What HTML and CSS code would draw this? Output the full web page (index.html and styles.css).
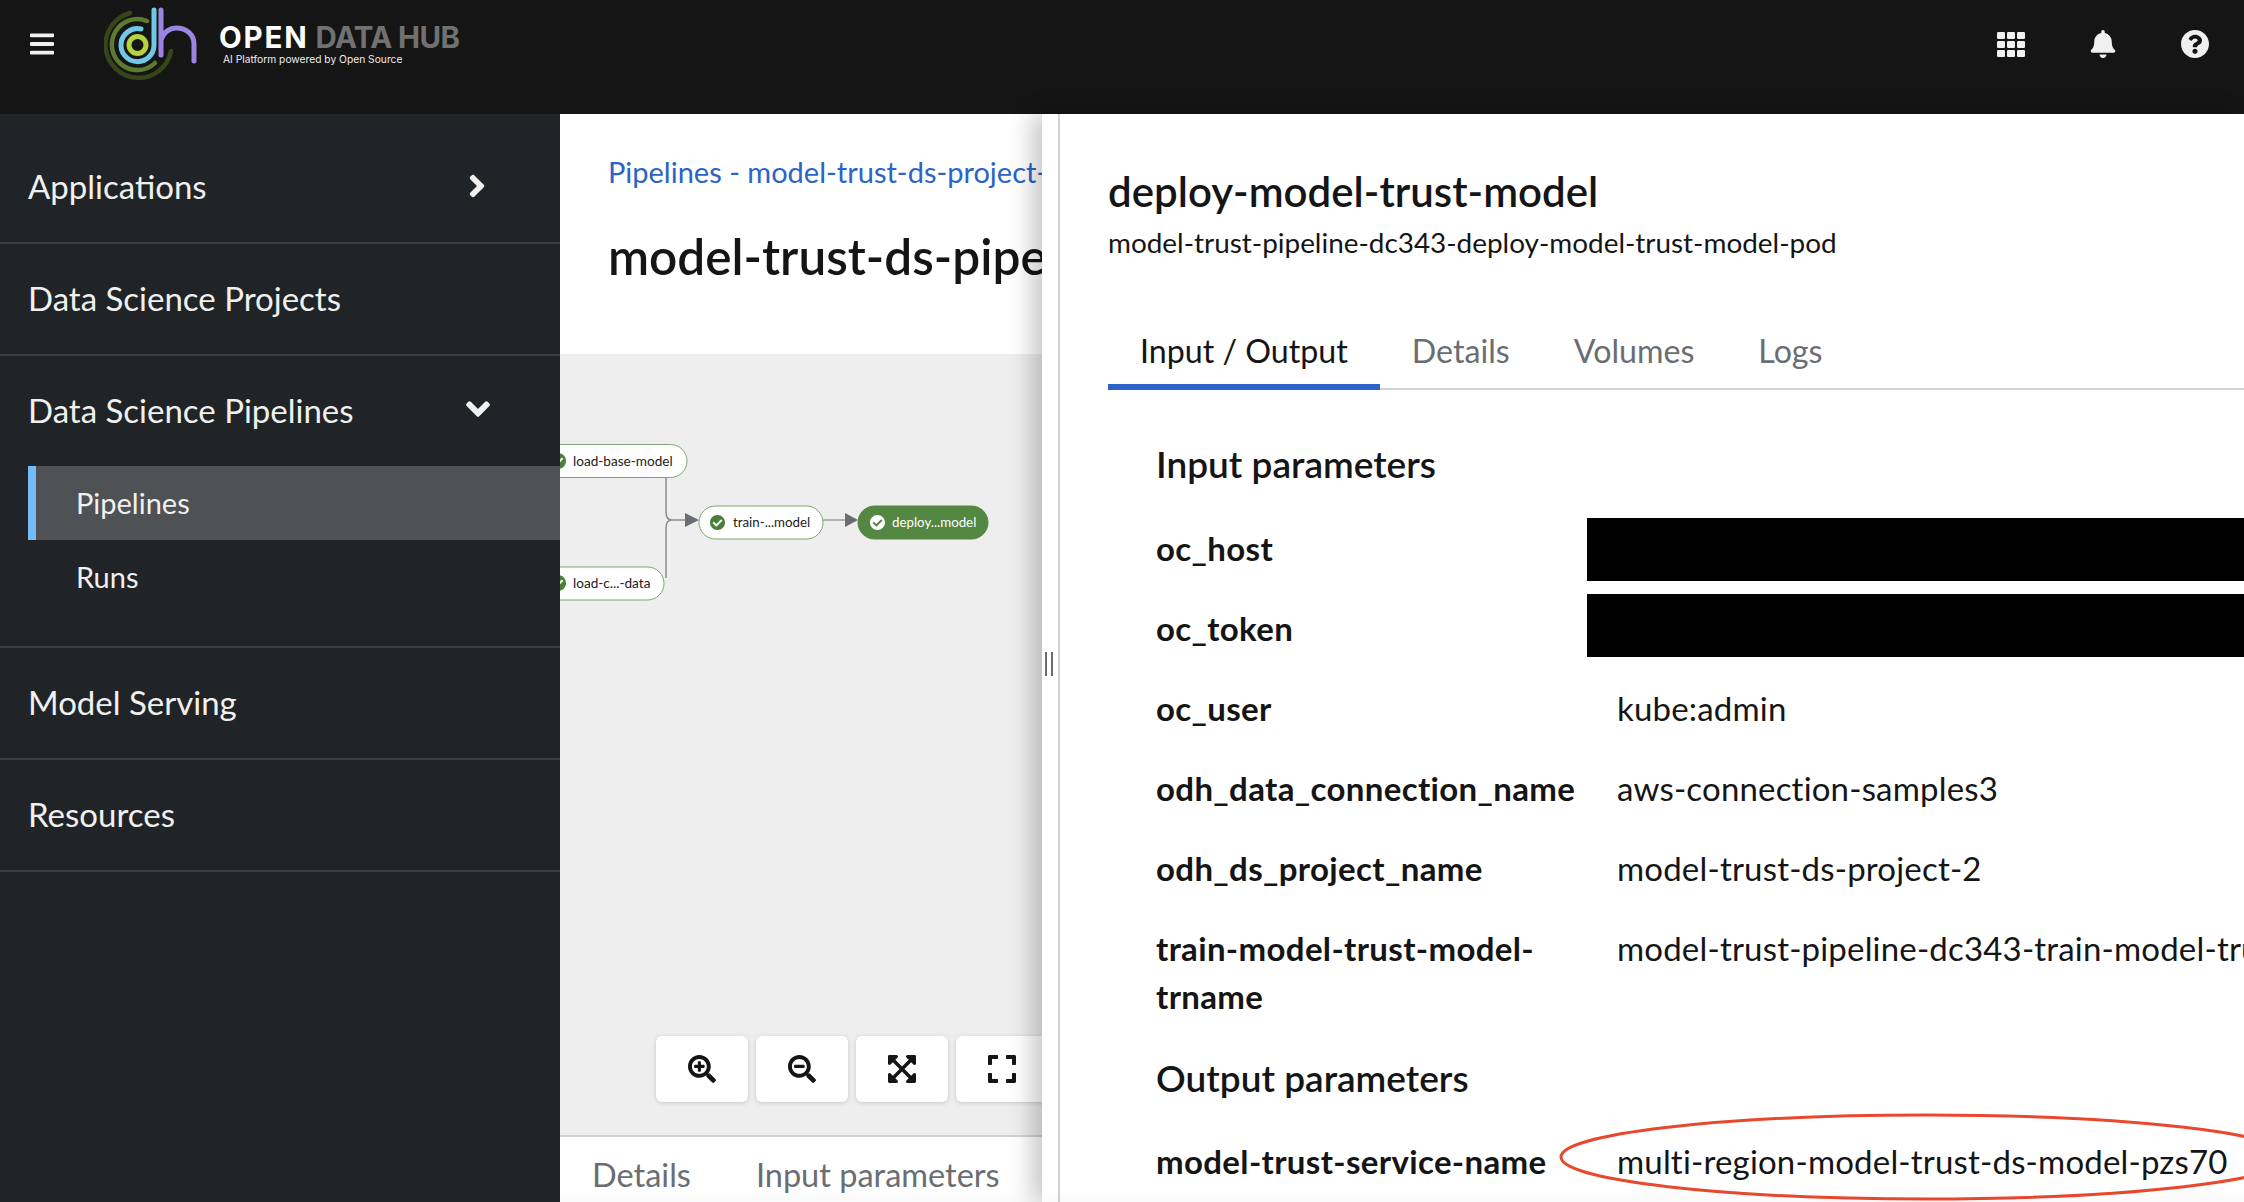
FILE: index.html
```html
<!DOCTYPE html>
<html lang="en">
<head>
    <meta charset="UTF-8">
    <title>Open Data Hub - Pipelines</title>
    <link rel="stylesheet" href="styles.css">
</head>
<body>
    <header class="masthead">
        <svg class="hamburger" viewBox="0 0 448 512"><path d="M16 132h416c8.837 0 16-7.163 16-16V76c0-8.837-7.163-16-16-16H16C7.163 60 0 67.163 0 76v40c0 8.837 7.163 16 16 16zm0 160h416c8.837 0 16-7.163 16-16v-40c0-8.837-7.163-16-16-16H16c-8.837 0-16 7.163-16 16v40c0 8.837 7.163 16 16 16zm0 160h416c8.837 0 16-7.163 16-16v-40c0-8.837-7.163-16-16-16H16c-8.837 0-16 7.163-16 16v40c0 8.837 7.163 16 16 16z"/></svg>
        <svg class="logo" viewBox="104 6 94 76" fill="none" stroke-linecap="round">
            <path d="M130 13 A 33 33 0 1 0 171 51" stroke="#36451a" stroke-width="4.5"/>
            <path d="M147 21 A 25.5 25.5 0 1 0 155 63" stroke="#5e7a2e" stroke-width="4.5"/>
            <path d="M141 29 A 16.5 16.5 0 1 0 154 45 V 10" stroke="#72c7e7" stroke-width="5"/>
            <circle cx="137.5" cy="45" r="8.5" stroke="#b4d23c" stroke-width="5"/>
            <path d="M161 10 V 55 M161 40 C 164 31 171 28 176 28 C 187 28 194 35 194 44 V 61" stroke="#9c85e2" stroke-width="5"/>
        </svg>
        <div class="brand">
            <div class="brand-name"><span class="brand-open">OPEN</span> <span class="brand-dim">DATA HUB</span></div>
            <div class="brand-tag">AI Platform powered by Open Source</div>
        </div>
        <div class="masthead-tools">
            <span class="tool">
                <svg class="grid-icon" viewBox="0 0 28 25">
                    <rect x="0" y="0" width="8" height="7" rx="1.2"/><rect x="10" y="0" width="8" height="7" rx="1.2"/><rect x="20" y="0" width="8" height="7" rx="1.2"/>
                    <rect x="0" y="9" width="8" height="7" rx="1.2"/><rect x="10" y="9" width="8" height="7" rx="1.2"/><rect x="20" y="9" width="8" height="7" rx="1.2"/>
                    <rect x="0" y="18" width="8" height="7" rx="1.2"/><rect x="10" y="18" width="8" height="7" rx="1.2"/><rect x="20" y="18" width="8" height="7" rx="1.2"/>
                </svg>
            </span>
            <span class="tool">
                <svg class="round-icon" viewBox="0 0 448 512"><path d="M224 512c35.32 0 63.97-28.65 63.97-64H160.03c0 35.35 28.65 64 63.97 64zm215.39-149.71c-19.32-20.76-55.47-51.99-55.47-154.29 0-77.7-54.48-139.9-127.94-155.16V32c0-17.67-14.32-32-31.98-32s-31.98 14.33-31.98 32v20.84C118.56 68.1 64.08 130.3 64.08 208c0 102.3-36.15 133.53-55.47 154.29-6 6.45-8.66 14.16-8.61 21.71.11 16.4 12.98 32 32.1 32h383.8c19.12 0 32-15.6 32.1-32 .05-7.55-2.61-15.27-8.61-21.71z"/></svg>
            </span>
            <span class="tool">
                <svg class="round-icon" viewBox="8 8 496 496"><path d="M504 256c0 136.997-111.043 248-248 248S8 392.997 8 256C8 119.083 119.043 8 256 8s248 111.083 248 248zM262.655 90c-54.497 0-89.255 22.957-116.549 63.758-3.536 5.286-2.353 12.415 2.715 16.258l34.699 26.31c5.205 3.947 12.621 3.008 16.665-2.122 17.864-22.658 30.113-35.797 57.303-35.797 20.429 0 45.698 13.148 45.698 32.958 0 14.976-12.363 22.667-32.534 33.976C247.128 238.528 216 254.941 216 296v4c0 6.627 5.373 12 12 12h56c6.627 0 12-5.373 12-12v-1.333c0-28.462 83.186-29.647 83.186-106.667 0-58.002-60.165-102-116.531-102zM256 338c-25.365 0-46 20.635-46 46 0 25.364 20.635 46 46 46s46-20.636 46-46c0-25.365-20.635-46-46-46z"/></svg>
            </span>
        </div>
    </header>

    <div class="page">
        <nav class="sidebar">
            <div class="nav-item nav-first">
                <span>Applications</span>
                <svg class="angle-right" viewBox="0 0 256 512"><path d="M224.3 273l-136 136c-9.4 9.4-24.6 9.4-33.9 0l-22.6-22.6c-9.4-9.4-9.4-24.6 0-33.9l96.4-96.4-96.4-96.4c-9.4-9.4-9.4-24.6 0-33.9L54.3 103c9.4-9.4 24.6-9.4 33.9 0l136 136c9.5 9.4 9.5 24.6.1 34z"/></svg>
            </div>
            <div class="nav-item"><span>Data Science Projects</span></div>
            <div class="nav-group">
                <div class="nav-group-title">
                    <span>Data Science Pipelines</span>
                    <svg class="angle-down" viewBox="0 0 320 512"><path d="M143 352.3L7 216.3c-9.4-9.4-9.4-24.6 0-33.9l22.6-22.6c9.4-9.4 24.6-9.4 33.9 0l96.4 96.4 96.4-96.4c9.4-9.4 24.6-9.4 33.9 0l22.6 22.6c9.4 9.4 9.4 24.6 0 33.9l-136 136c-9.2 9.4-24.4 9.4-33.8 0z"/></svg>
                </div>
                <div class="nav-sub nav-sub-active">Pipelines</div>
                <div class="nav-sub">Runs</div>
            </div>
            <div class="nav-item"><span>Model Serving</span></div>
            <div class="nav-item"><span>Resources</span></div>
        </nav>

        <main class="content">
            <div class="content-head">
                <div class="breadcrumb">Pipelines - model-trust-ds-project-2</div>
                <h1 class="page-title">model-trust-ds-pipeline</h1>
            </div>
            <div class="graph">
                <svg class="graph-svg" viewBox="560 354 482 781">
                    <path class="edge" d="M666 478 V512 Q666 520 672 520 H686 M666 578 V528 Q666 520 672 520"/>
                    <path class="edge edge-light" d="M823 520 H846"/>
                    <path class="arrow" d="M685 513 L699 520 L685 527 Z"/>
                    <path class="arrow" d="M845 513 L858 520 L845 527 Z"/>

                    <rect class="node" x="520" y="444.500" width="167" height="33" rx="16.500"/>
                    <use href="#check" x="550" y="453" width="16" height="16" class="check"/>
                    <text class="node-label" x="573" y="466">load-base-model</text>

                    <rect class="node" x="520" y="567" width="144" height="33" rx="16.500"/>
                    <use href="#check" x="550" y="575" width="16" height="16" class="check"/>
                    <text class="node-label" x="573" y="588">load-c...-data</text>

                    <rect class="node" x="699" y="506" width="124" height="33" rx="16.500"/>
                    <use href="#check" x="710" y="515" width="15" height="15" class="check"/>
                    <text class="node-label node-label-short" x="733" y="527">train-...model</text>

                    <rect class="node node-on" x="858" y="506" width="130" height="33" rx="16.500"/>
                    <use href="#check" x="870" y="515" width="15" height="15" class="check-on"/>
                    <text class="node-label node-label-short node-label-on" x="892" y="527">deploy...model</text>

                    <defs>
                        <symbol id="check" viewBox="8 8 496 496"><path d="M504 256c0 136.967-111.033 248-248 248S8 392.967 8 256 119.033 8 256 8s248 111.033 248 248zM227.314 387.314l184-184c6.248-6.248 6.248-16.379 0-22.627l-22.627-22.627c-6.248-6.249-16.379-6.249-22.628 0L216 308.118l-70.059-70.059c-6.248-6.248-16.379-6.248-22.628 0l-22.627 22.627c-6.248 6.248-6.248 16.379 0 22.627l104 104c6.249 6.249 16.379 6.249 22.628.001z"/></symbol>
                    </defs>
                </svg>
                <div class="graph-tools">
                    <button class="graph-btn"><svg viewBox="0 0 512 512"><path d="M304 192v32c0 6.6-5.4 12-12 12h-56v56c0 6.6-5.4 12-12 12h-32c-6.6 0-12-5.4-12-12v-56h-56c-6.6 0-12-5.4-12-12v-32c0-6.6 5.4-12 12-12h56v-56c0-6.6 5.4-12 12-12h32c6.6 0 12 5.4 12 12v56h56c6.6 0 12 5.4 12 12zm201 284.7L476.7 505c-9.4 9.4-24.6 9.4-33.9 0L343 405.3c-4.5-4.5-7-10.6-7-17V372c-35.3 27.6-79.7 44-128 44C93.1 416 0 322.9 0 208S93.1 0 208 0s208 93.1 208 208c0 48.3-16.4 92.7-44 128h16.3c6.4 0 12.5 2.5 17 7l99.7 99.7c9.3 9.4 9.3 24.6 0 34zM344 208c0-75.2-60.8-136-136-136S72 132.8 72 208s60.8 136 136 136 136-60.8 136-136z"/></svg></button>
                    <button class="graph-btn"><svg viewBox="0 0 512 512"><path d="M304 192v32c0 6.6-5.4 12-12 12H124c-6.6 0-12-5.4-12-12v-32c0-6.6 5.4-12 12-12h168c6.6 0 12 5.4 12 12zm201 284.7L476.7 505c-9.4 9.4-24.6 9.4-33.9 0L343 405.3c-4.5-4.5-7-10.6-7-17V372c-35.3 27.6-79.7 44-128 44C93.1 416 0 322.9 0 208S93.1 0 208 0s208 93.1 208 208c0 48.3-16.4 92.7-44 128h16.3c6.4 0 12.5 2.5 17 7l99.7 99.7c9.3 9.4 9.3 24.6 0 34zM344 208c0-75.2-60.8-136-136-136S72 132.8 72 208s60.8 136 136 136 136-60.8 136-136z"/></svg></button>
                    <button class="graph-btn"><svg viewBox="0 32 448 448"><path d="M448 344v112a23.94 23.94 0 0 1-24 24H312c-21.39 0-32.09-25.9-17-41l36.2-36.2L224 295.6 116.77 402.9 153 439c15.09 15.1 4.39 41-17 41H24a23.94 23.94 0 0 1-24-24V344c0-21.4 25.89-32.1 41-17l36.19 36.2L184.46 256 77.18 148.7 41 185c-15.1 15.1-41 4.4-41-17V56a23.94 23.94 0 0 1 24-24h112c21.39 0 32.09 25.9 17 41l-36.2 36.2L224 216.4l107.23-107.3L295 73c-15.09-15.1-4.39-41 17-41h112a23.94 23.94 0 0 1 24 24v112c0 21.4-25.89 32.1-41 17l-36.19-36.2L263.54 256l107.28 107.3L407 327.1c15.1-15.2 41-4.5 41 16.9z"/></svg></button>
                    <button class="graph-btn"><svg viewBox="0 32 448 448"><path d="M0 180V56c0-13.3 10.7-24 24-24h124c6.6 0 12 5.4 12 12v40c0 6.6-5.4 12-12 12H64v84c0 6.6-5.4 12-12 12H12c-6.6 0-12-5.4-12-12zM288 44v40c0 6.6 5.4 12 12 12h84v84c0 6.6 5.4 12 12 12h40c6.6 0 12-5.4 12-12V56c0-13.3-10.7-24-24-24H300c-6.6 0-12 5.4-12 12zm148 276h-40c-6.6 0-12 5.4-12 12v84h-84c-6.6 0-12 5.4-12 12v40c0 6.6 5.4 12 12 12h124c13.3 0 24-10.7 24-24V332c0-6.6-5.4-12-12-12zM160 468v-40c0-6.6-5.4-12-12-12H64v-84c0-6.6-5.4-12-12-12H12c-6.6 0-12 5.4-12 12v124c0 13.3 10.7 24 24 24h124c6.6 0 12-5.4 12-12z"/></svg></button>
                </div>
            </div>
            <div class="content-tabs">
                <span>Details</span>
                <span>Input parameters</span>
            </div>
        </main>

        <aside class="drawer">
            <div class="splitter"><span class="grip"></span></div>
            <div class="drawer-body">
                <h2 class="drawer-title">deploy-model-trust-model</h2>
                <div class="drawer-sub">model-trust-pipeline-dc343-deploy-model-trust-model-pod</div>
                <div class="tabs">
                    <span class="tab tab-active">Input / Output</span>
                    <span class="tab">Details</span>
                    <span class="tab">Volumes</span>
                    <span class="tab">Logs</span>
                </div>
                <div class="params">
                    <h3 class="params-title">Input parameters</h3>
                    <div class="param-grid">
                        <div class="param-name">oc_host</div>
                        <div class="param-value"><span class="redacted"></span></div>
                        <div class="param-name">oc_token</div>
                        <div class="param-value"><span class="redacted redacted-token"></span></div>
                        <div class="param-name">oc_user</div>
                        <div class="param-value">kube:admin</div>
                        <div class="param-name">odh_data_connection_name</div>
                        <div class="param-value">aws-connection-samples3</div>
                        <div class="param-name">odh_ds_project_name</div>
                        <div class="param-value">model-trust-ds-project-2</div>
                        <div class="param-name">train-model-trust-model-trname</div>
                        <div class="param-value">model-trust-pipeline-dc343-train-model-trust-model</div>
                    </div>
                    <h3 class="params-title params-title-out">Output parameters</h3>
                    <div class="param-grid param-grid-out">
                        <div class="param-name">model-trust-service-name</div>
                        <div class="param-value">multi-region-model-trust-ds-model-pzs70</div>
                    </div>
                </div>
            </div>
            <svg class="callout" viewBox="0 0 760 90" fill="none"><ellipse cx="367" cy="44" rx="365" ry="42" stroke="#e8492e" stroke-width="3"/></svg>
        </aside>
    </div>
    <div class="bottom-fade"></div>
</body>
</html>
```

FILE: styles.css
```css
* {
    box-sizing: border-box;
}
html, body {
    margin: 0;
    height: 100%;
}
body {
    display: flex;
    flex-direction: column;
    overflow: hidden;
    font-family: Lato, "Noto Sans", sans-serif;
    color: #151515;
    background: #fff;
}

/* masthead */
.masthead {
    flex: 0 0 114px;
    display: flex;
    align-items: flex-start;
    background: #151515;
}
.hamburger {
    width: 24px;
    height: 28px;
    margin: 30px 0 0 30px;
    fill: #f0f0f0;
}
.logo {
    width: 94px;
    height: 76px;
    margin: 6px 0 0 50px;
}
.brand {
    margin: 21px 0 0 21px;
    color: #fff;
}
.brand-name {
    font-family: Inter, sans-serif;
    font-size: 29.500px;
    line-height: 32px;
    font-weight: 700;
}
.brand-open {
    letter-spacing: 1.8px;
}
.brand-dim {
    color: #717171;
    letter-spacing: -0.6px;
}
.brand-tag {
    font-family: Inter, sans-serif;
    font-size: 10.250px;
    line-height: 12px;
    margin: 0 0 0 4px;
    color: #eee;
}
.masthead-tools {
    margin-left: auto;
    margin-right: 3px;
    display: flex;
}
.tool {
    width: 92px;
    height: 88px;
    display: flex;
    align-items: center;
    justify-content: center;
    fill: #f0f0f0;
}
.grid-icon {
    width: 28px;
    height: 25px;
}
.round-icon {
    width: 28px;
    height: 28px;
}

/* main row */
.page {
    flex: 1;
    display: flex;
    min-height: 0;
}
.sidebar {
    flex: 0 0 560px;
    background: #212427;
    color: #f0f0f0;
    font-size: 33px;
}
.nav-item {
    height: 112px;
    padding: 0 28px 3px;
    display: flex;
    align-items: center;
    justify-content: space-between;
    border-bottom: 2px solid #3c3f42;
}
.nav-first {
    height: 130px;
    padding-top: 18px;
}
.angle-right {
    width: 20px;
    height: 36px;
    margin-right: 45px;
    fill: #f0f0f0;
}
.nav-group {
    height: 292px;
    border-bottom: 2px solid #3c3f42;
}
.nav-group-title {
    height: 110px;
    padding: 0 28px 3px;
    display: flex;
    align-items: center;
    justify-content: space-between;
}
.angle-down {
    width: 26px;
    height: 38px;
    margin: -2px 41px 0 0;
    fill: #f0f0f0;
}
.nav-sub {
    margin-left: 28px;
    height: 74px;
    padding: 0 0 2px 48px;
    display: flex;
    align-items: center;
    font-size: 29px;
}
.nav-sub-active {
    background: #4f5255;
    border-left: 8px solid #73bcf7;
    padding-left: 40px;
}

/* left content */
.content {
    flex: 0 0 482px;
    display: flex;
    flex-direction: column;
    min-width: 0;
    overflow: hidden;
    white-space: nowrap;
}
.content-head {
    flex: 0 0 240px;
    padding: 36px 0 0 48px;
}
.breadcrumb {
    font-size: 29px;
    line-height: 44px;
    color: #2b63c6;
}
.page-title {
    margin: 32px 0 0;
    font-size: 49.500px;
    line-height: 60px;
    font-weight: 600;
}
.graph {
    flex: 1;
    position: relative;
    background: #eee;
    overflow: hidden;
}
.graph-svg {
    position: absolute;
    inset: 0;
    width: 100%;
    height: 100%;
}
.edge {
    fill: none;
    stroke: #8a8d90;
    stroke-width: 1.500;
}
.edge-light {
    stroke: #b0b2b4;
    stroke-width: 2;
}
.arrow {
    fill: #6a6e73;
}
.node {
    fill: #fff;
    stroke: #7fa571;
    stroke-width: 1;
}
.node-on {
    fill: #548742;
    stroke: #548742;
}
.check {
    fill: #4a8036;
}
.check-on {
    fill: #fff;
}
.node-label {
    font-size: 13.600px;
    fill: #222;
}
.node-label-short {
    font-size: 13.300px;
}
.node-label-on {
    fill: #fff;
}
.graph-tools {
    position: absolute;
    left: 96px;
    bottom: 33px;
    display: flex;
    gap: 8px;
}
.graph-btn {
    width: 92px;
    height: 66px;
    padding: 0;
    border: none;
    border-radius: 6px;
    background: #fff;
    box-shadow: 0 1px 4px rgba(0, 0, 0, 0.16);
    display: flex;
    align-items: center;
    justify-content: center;
}
.graph-btn svg {
    width: 28px;
    height: 28px;
    fill: #151515;
}
.content-tabs {
    flex: 0 0 67px;
    border-top: 2px solid #d2d2d2;
    padding: 9px 0 0 32px;
    display: flex;
    align-items: center;
    gap: 65px;
    font-size: 32.500px;
    color: #6a6e73;
}

/* drawer */
.drawer {
    flex: 1;
    min-width: 0;
    position: relative;
    display: flex;
    background: #fff;
    box-shadow: -10px 0 22px rgba(0, 0, 0, 0.22);
}
.splitter {
    flex: 0 0 18px;
    border-right: 2px solid #d2d2d2;
    display: flex;
    align-items: center;
    justify-content: center;
}
.grip {
    width: 8px;
    height: 24px;
    margin: 12px 2px 0 0;
    border-left: 2px solid #6a6e73;
    border-right: 2px solid #6a6e73;
}
.drawer-body {
    flex: 1;
    min-width: 0;
    padding: 48px 0 0 48px;
    overflow: hidden;
    white-space: nowrap;
}
.drawer-title {
    margin: 0;
    font-size: 42px;
    line-height: 58px;
    font-weight: 600;
}
.drawer-sub {
    font-size: 27.900px;
    line-height: 34px;
    margin-top: 5px;
}
.tabs {
    margin-top: 59px;
    display: flex;
    border-bottom: 2px solid #d2d2d2;
}
.tab {
    padding: 0 32px 2px;
    height: 72px;
    margin-bottom: -2px;
    display: flex;
    align-items: center;
    font-size: 32.200px;
    color: #6a6e73;
    border-bottom: 6px solid transparent;
}
.tab-active {
    color: #151515;
    border-bottom-color: #2b63c6;
}
.params {
    padding: 50px 0 0 48px;
}
.params-title {
    margin: 0;
    font-size: 37px;
    line-height: 48px;
    font-weight: 600;
}
.params-title-out {
    margin-top: 34px;
}
.param-grid {
    margin-top: 36px;
    display: grid;
    grid-template-columns: 461px 1fr;
    row-gap: 32px;
    font-size: 33px;
    line-height: 48px;
    letter-spacing: 0.18px;
}
.param-grid-out {
    margin-top: 35px;
}
.param-name {
    font-weight: 700;
    letter-spacing: 0.35px;
    white-space: normal;
    padding-right: 30px;
}
.param-value {
    position: relative;
    min-width: 0;
}
.redacted {
    position: absolute;
    left: -30px;
    right: 0;
    top: -6px;
    height: 63px;
    background: #000;
}
.redacted-token {
    top: -10px;
}
.callout {
    position: absolute;
    left: 517px;
    top: 999px;
    width: 760px;
    height: 90px;
}
.bottom-fade {
    position: fixed;
    left: 560px;
    right: 0;
    bottom: 0;
    height: 14px;
    background: linear-gradient(rgba(0, 0, 0, 0), rgba(0, 0, 0, 0.02));
}
```
